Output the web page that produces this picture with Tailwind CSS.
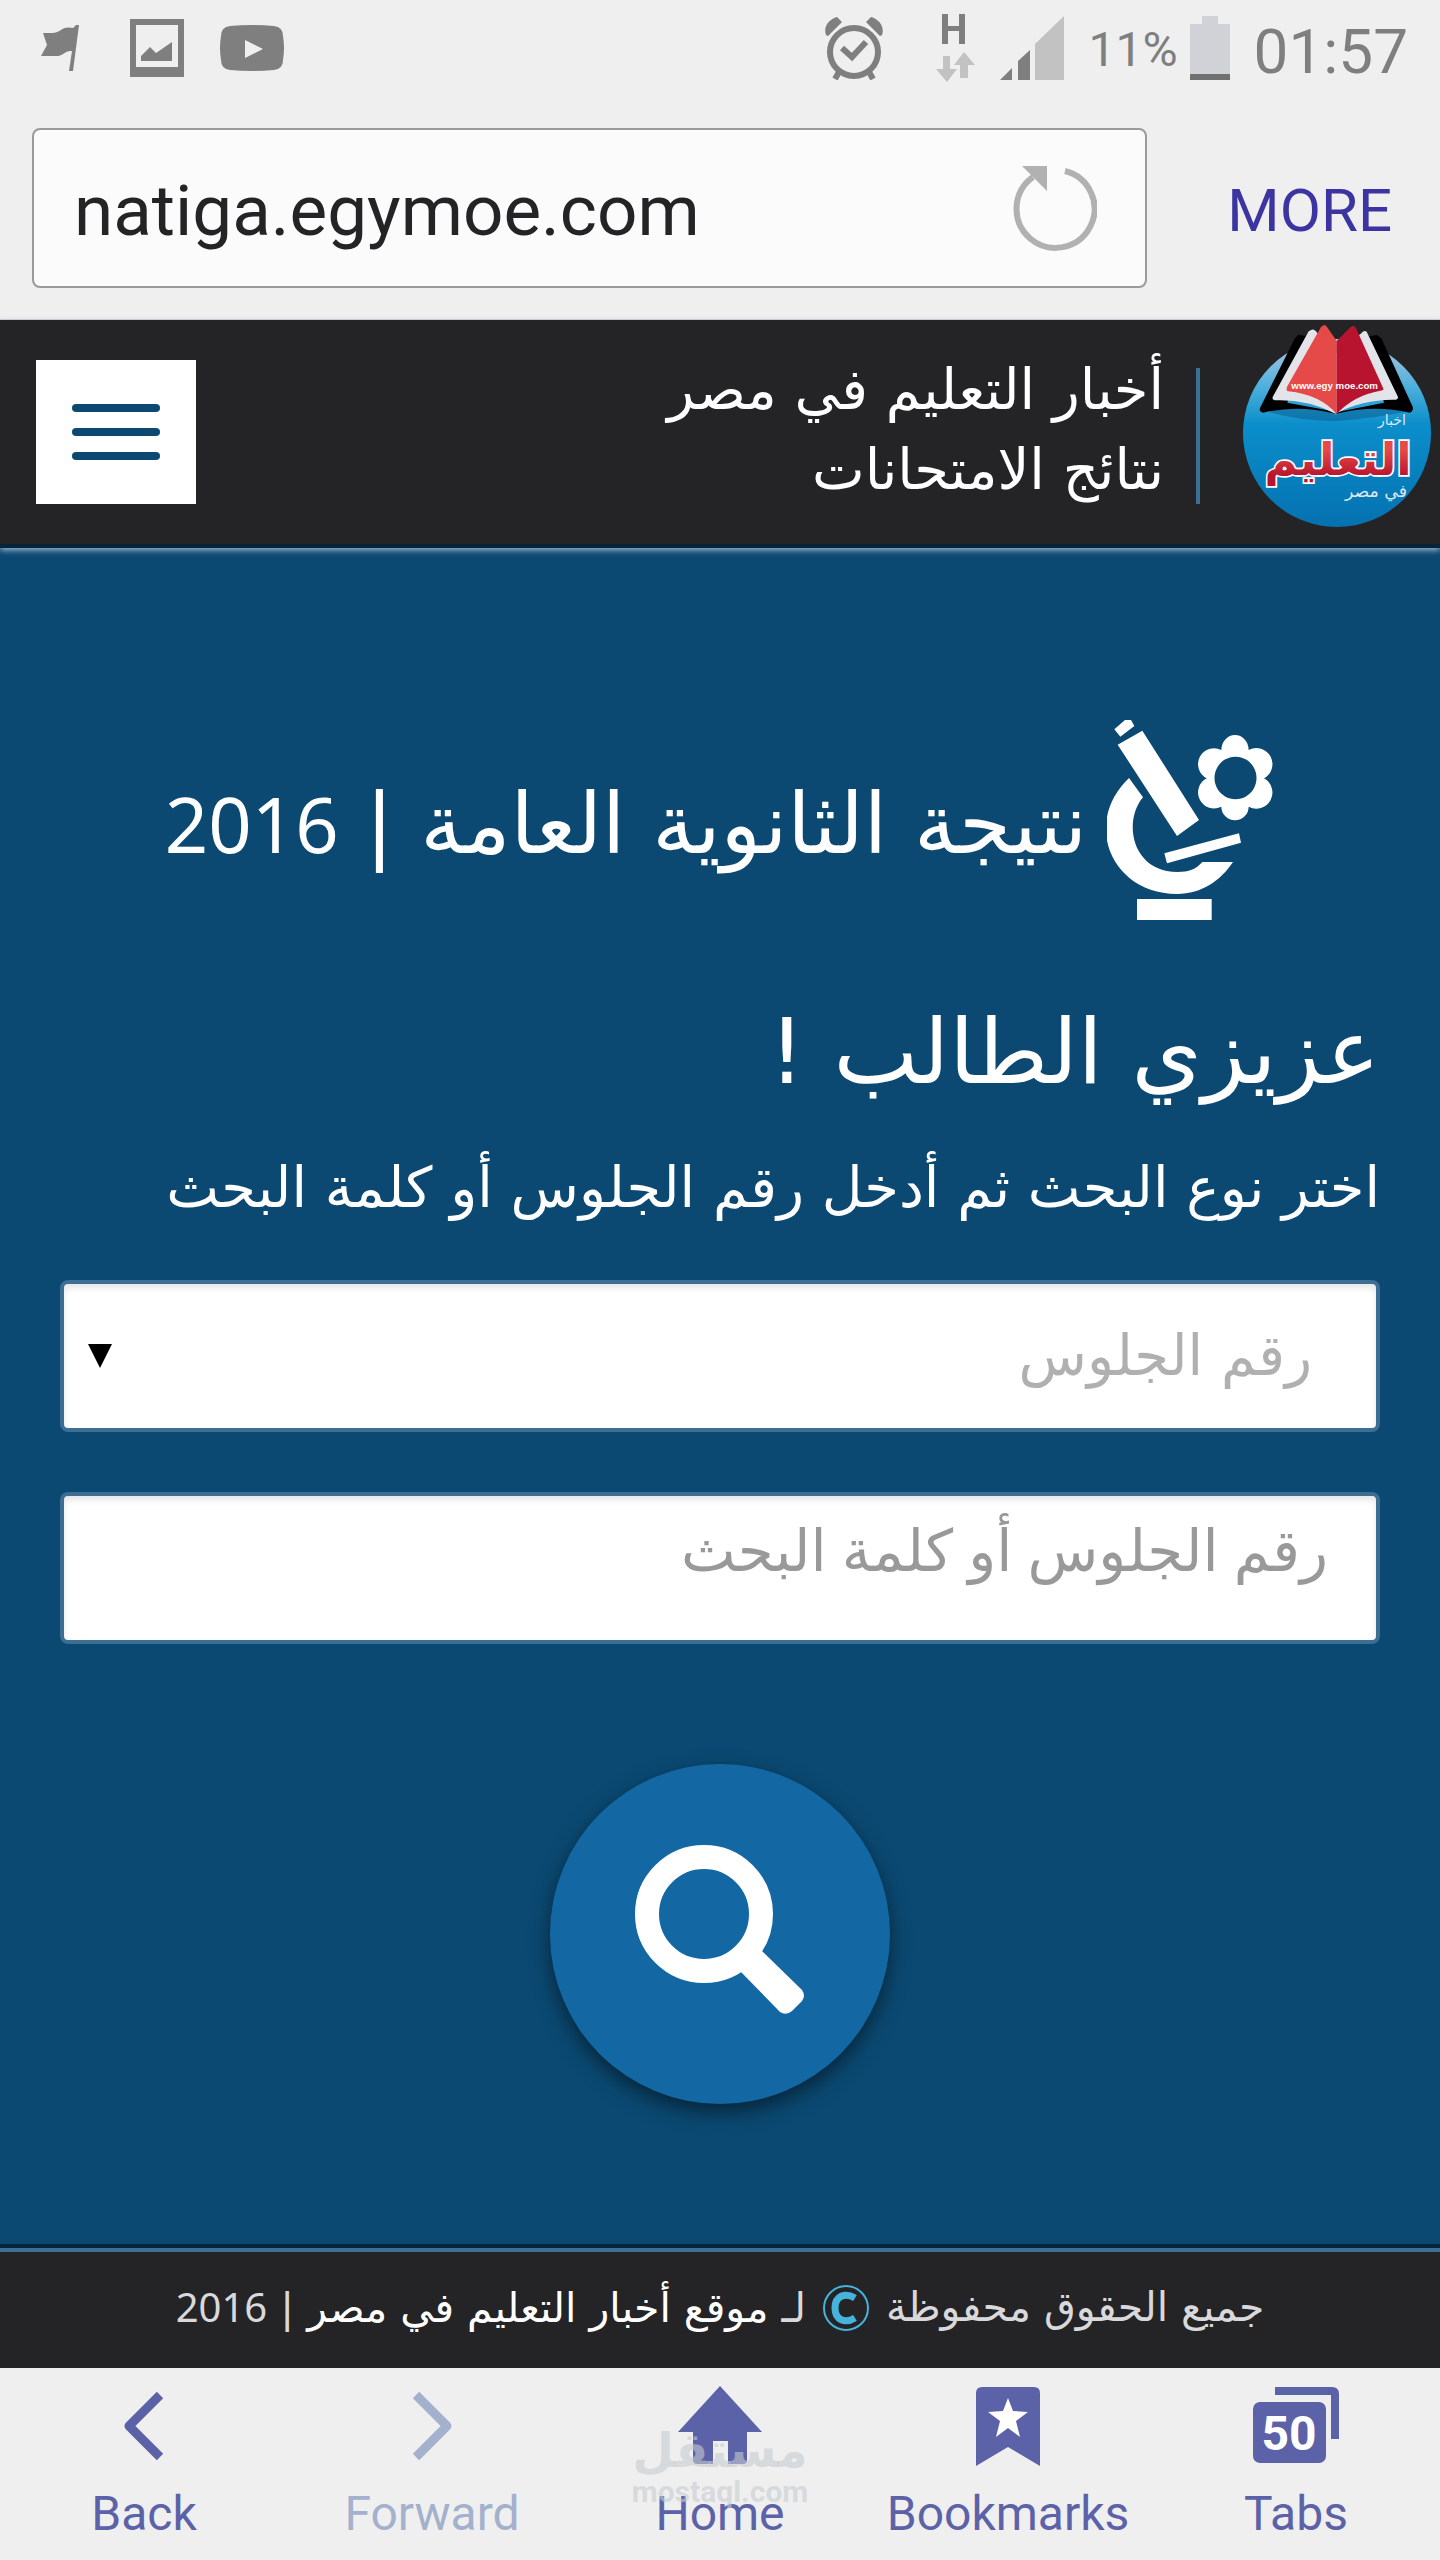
<!DOCTYPE html>
<html lang="ar">
<head>
    <meta charset="UTF-8">
    <meta name="viewport" content="width=device-width, initial-scale=1">
    <title>نتيجة الثانوية العامة | 2016</title>
    <script src="https://cdn.jsdelivr.net/npm/@tailwindcss/browser@4"></script>
</head>
<body class="min-h-screen flex flex-col bg-[#0b4972] font-['DejaVu_Sans',sans-serif] text-white">

    <!-- Phone status bar -->
    <div class="flex items-center justify-between h-24 px-8 bg-[#efefef] text-[#7f7f7f] font-[Roboto,sans-serif]">
        <div class="flex items-center gap-9 pl-2">
            <svg class="w-[54px] h-[60px]" viewBox="0 0 54 60" fill="currentColor">
                <path d="M36 7h3l-6 46h-4l3-20c-7-1-8 5-16 5l-15 0 6-11-4-12c7 0 13 1 18-3 3-3 8-3 12-2z" />
            </svg>
            <svg class="w-[54px] h-[58px]" viewBox="0 0 54 58" fill="currentColor">
                <path fill-rule="evenodd" d="M0 0h54v58H0zM6 6v42h42V6z" />
                <path d="M11 42V37l9-9 6 6 16-11v19z" />
            </svg>
            <svg class="w-[64px] h-[46px]" viewBox="0 0 64 46" fill="currentColor">
                <path fill-rule="evenodd" d="M10 1Q32-1 54 1Q63 2 63 11Q65 23 63 35Q63 44 54 45Q32 47 10 45Q1 44 1 35Q-1 23 1 11Q1 2 10 1zM25 15v18l18-9z" />
            </svg>
        </div>
        <div class="flex items-center gap-6">
            <svg class="w-[60px] h-[64px] mr-7" viewBox="0 0 60 64" fill="none" stroke="currentColor">
                <circle cx="30" cy="36" r="24" stroke-width="6" />
                <path stroke-width="6" d="M18 32l10 9 14-15M15 56l-4 7M45 56l4 7" />
                <path fill="currentColor" stroke="none" d="M2 19C-1 11 5 3 13 1l5 5L4 20zM58 19C61 11 55 3 47 1l-5 5 14 14z" />
            </svg>
            <svg class="w-10 h-[68px]" viewBox="0 0 40 68">
                <path fill="#7f7f7f" d="M6 0h6v12h11V0h6v30h-6V17H12v13H6z" />
                <path fill="#c2c2c2" d="M7 42h7v13h7L11 68 0 55h7zM24 64h8V51h7L28 38 18 51h6z" />
            </svg>
            <svg class="w-16 h-16" viewBox="0 0 64 64">
                <path fill="#c2c2c2" d="M64 0v64H35V28z" />
                <path fill="#7f7f7f" d="M30 34v30H18V45zM12 52v12H0z" />
            </svg>
            <div class="flex items-center gap-3">
                <span class="pt-1 text-5xl">11%</span>
                <svg class="w-10 h-16" viewBox="0 0 40 64">
                    <path fill="#d1d2d7" d="M12 0h16v8h12v50H0V8h12z" />
                    <path fill="#707070" d="M0 58h40v6H0z" />
                </svg>
            </div>
            <span class="pt-2 text-[62px] leading-none">01:57</span>
        </div>
    </div>

    <!-- Address bar -->
    <div class="flex items-center h-56 px-8 bg-[#efefef] border-b border-[#cfcfcf] font-[Roboto,sans-serif]">
        <div class="flex flex-1 items-center h-40 pl-10 pr-12 rounded-lg border-2 border-[#9a9a9a] bg-[#fbfbfb]">
            <input type="text" value="natiga.egymoe.com" aria-label="Address" class="flex-1 min-w-0 pt-2 text-[71px] text-[#242426] outline-none">
            <button type="button" aria-label="Reload">
                <svg class="w-[84px] h-[86px]" viewBox="0 0 84 86">
                    <path fill="none" stroke="#b1b1b1" stroke-width="6" d="M52 6A39 39 0 1 1 20 12" />
                    <path fill="#b1b1b1" d="M9 1h25v25z" />
                </svg>
            </button>
        </div>
        <button type="button" class="pl-20 pr-4 pt-1.5 text-[60px] text-[#3c34a0]">MORE</button>
    </div>

    <!-- Site header -->
    <header dir="rtl" class="relative flex items-center h-56 pr-2 pl-9 bg-[#242426] border-b-4 border-[#06243a] box-content shadow-[0_2px_6px_#a9b9d8]">
        <a href="#" aria-label="أخبار التعليم في مصر" class="pb-3">
            <svg class="w-[190px] h-[204px]" viewBox="64 42 570 612">
                <defs>
                    <linearGradient id="globe" x1="0" y1="0" x2="0" y2="1">
                        <stop offset="0" stop-color="#b9c6e4" />
                        <stop offset=".25" stop-color="#4fb0dc" />
                        <stop offset=".45" stop-color="#0b8fcb" />
                        <stop offset="1" stop-color="#0571b0" />
                    </linearGradient>
                    <linearGradient id="word" x1="0" y1="0" x2="0" y2="1">
                        <stop offset=".3" stop-color="#e54a48" />
                        <stop offset=".8" stop-color="#b9142f" />
                    </linearGradient>
                </defs>
                <circle cx="349" cy="369" r="282" fill="url(#globe)" />
                <path fill="#07598c" opacity=".5" d="M140 305q100-26 205 10 100-36 210-10-100 20-210 28-105 0-205-28z" />
                <path fill="#000" d="M232 75l28 3-60 200 150 28 140-28-50-198 28-5 14 10 94 205q4 12-8 18-110-26-223 4-113-30-217-4-14-2-10-14L222 86z" />
                <path fill="#e3e4ea" d="M273 59q10-2 17 11l57 60 75-60q8-11 16-5l94 196q0 8-8 8-96-2-180 42-84-44-182-40-8-2-6-10L264 64z" />
                <path fill="#e54a48" d="M310 45q6 0 9 6l29 42v219q-50-58-145-68-8-2-4-14L301 51z" />
                <path fill="#b9142f" d="M398 47q6 2 8 8l83 183q-2 4-10 4-80 14-131 70V93l42-42z" />
                <text x="342" y="237" text-anchor="middle" fill="#fff" font-size="29" font-weight="bold" class="font-['Liberation_Sans',sans-serif]">www.egy moe.com</text>
                <g class="font-['DejaVu_Sans',sans-serif]" text-anchor="middle">
                    <text x="514" y="346" fill="#dfe8f2" font-size="42">اخبار</text>
                    <text x="352" y="496" fill="url(#word)" stroke="#fff" stroke-width="10" paint-order="stroke" font-size="134" font-weight="bold">التعليم</text>
                    <text x="466" y="562" fill="#dfe8f2" font-size="52">في مصر</text>
                </g>
            </svg>
        </a>
        <div class="w-1 h-[136px] mt-2 mr-[42px] bg-[#3c6f94]"></div>
        <div class="pb-1 mr-8 text-[56px] leading-[80px]">
            <p>أخبار التعليم في مصر</p>
            <p>نتائج الامتحانات</p>
        </div>
        <button type="button" aria-label="القائمة" class="flex flex-col items-center justify-center gap-4 w-40 h-36 mr-auto bg-white">
            <span class="w-[88px] h-2 rounded-sm bg-[#0b4972]"></span>
            <span class="w-[88px] h-2 rounded-sm bg-[#0b4972]"></span>
            <span class="w-[88px] h-2 rounded-sm bg-[#0b4972]"></span>
        </button>
    </header>

    <!-- Search form -->
    <main dir="rtl" class="flex-1 px-[60px] pt-[172px]">
        <div class="flex items-center justify-center gap-5">
            <svg class="w-[168px] h-[200px]" viewBox="72 60 504 600" fill="#fff">
                <path d="M94 88l32-28h18l10 18-42 32zM104 134l74-42 170 268-66 48z" />
                <path d="M138 234l42 58c-60 70-36 224 104 224 34 0 54-8 74-30h92c-36 54-92 96-168 96-196 0-286-212-144-348zM244 460l224-60 6 28-222 62zM162 597h224v63H162z" />
                <path fill-rule="evenodd" d="M415 150a41 45 0 0 1 82 0 44 44 0 0 1 46 85 44 44 0 0 1-46 85 41 41 0 0 1-82 0 44 44 0 0 1-44-85 44 44 0 0 1 44-85zM457 170a63 64 0 1 0 1 0z" />
            </svg>
            <h1 class="pt-2 text-[84px] leading-none">نتيجة الثانوية العامة | <span class="font-['Noto_Sans',sans-serif] text-[76px]">2016</span></h1>
        </div>
        <h2 class="mt-13 text-[90px] leading-[160px]">عزيزي الطالب !</h2>
        <p class="mt-2 mb-11 text-[56px] leading-[96px]">اختر نوع البحث ثم أدخل رقم الجلوس أو كلمة البحث</p>

        <form class="flex flex-col">
            <div class="relative">
                <select aria-label="نوع البحث" class="appearance-none w-full h-[152px] px-16 rounded-lg border-4 border-[#3c6f94] bg-white text-[56px] text-[#b0b0b0] shadow-[inset_0_4px_6px_#0000001a]">
                    <option>رقم الجلوس</option>
                </select>
                <svg class="absolute left-7 top-16 w-6 h-6 pointer-events-none" viewBox="0 0 24 24"><path d="M0 0h24L12 24z" /></svg>
            </div>
            <input type="text" aria-label="كلمة البحث" placeholder="رقم الجلوس أو كلمة البحث" class="w-full h-[152px] mt-[60px] px-12 pb-10 rounded-lg border-4 border-[#3c6f94] bg-white font-['Noto_Sans','DejaVu_Sans',sans-serif] text-[58px] text-[#242426] placeholder:text-[#999] shadow-[inset_0_4px_6px_#0000001a]">
            <button type="submit" aria-label="بحث" class="self-center flex items-center justify-center w-[340px] h-[340px] pb-2 mt-[120px] rounded-full bg-[#1368a4] shadow-[0_8px_20px_#00000080]">
                <svg class="w-[170px] h-[170px]" viewBox="0 0 170 170">
                    <circle cx="69" cy="69" r="57" fill="none" stroke="#fff" stroke-width="24" />
                    <path fill="#fff" d="M106 127l21-21 40 39q4 6 0 11l-10 10q-6 5-12 1z" />
                </svg>
            </button>
        </form>
    </main>

    <!-- Copyright -->
    <footer dir="rtl" class="flex items-center justify-center gap-4 h-[120px] pb-1 border-t-4 border-[#3c6f94] bg-[#242426] text-[41px] text-[#d9d9dc] shadow-[0_-4px_0_#06243a]">
        <span>جميع الحقوق محفوظة</span>
        <svg class="w-12 h-12" viewBox="0 0 48 48" fill="none" stroke="#45b3dc">
            <circle cx="24" cy="24" r="22" stroke-width="2" />
            <path stroke-width="7" d="M33 14c-10-6-20-2-20 10s10 16 20 10" />
        </svg>
        <span>لـ <a href="#" class="text-white">موقع أخبار التعليم في مصر</a> | <span class="font-['Noto_Sans',sans-serif] text-[40px]">2016</span></span>
    </footer>

    <!-- Browser toolbar -->
    <nav class="relative grid grid-cols-5 h-48 pt-3.5 bg-[#efefef] font-[Roboto,sans-serif] text-5xl text-[#5c62a8]">
        <button type="button" class="flex flex-col items-center gap-5">
            <svg class="w-[88px] h-[88px]" viewBox="0 0 88 88" fill="none" stroke="currentColor" stroke-width="9" stroke-linejoin="round"><path d="M60 13L29 44l31 31" /></svg>
            Back
        </button>
        <button type="button" class="flex flex-col items-center gap-5 text-[#a3b1cd]">
            <svg class="w-[88px] h-[88px]" viewBox="0 0 88 88" fill="none" stroke="currentColor" stroke-width="9" stroke-linejoin="round"><path d="M28 13l31 31-31 31" /></svg>
            Forward
        </button>
        <button type="button" class="flex flex-col items-center gap-5">
            <svg class="w-[88px] h-[88px]" viewBox="0 0 88 88" fill="currentColor"><path d="M44 4l42 46H71v28q0 4-4 4H52V59H37v23H21q-4 0-4-4V50H2z" /></svg>
            Home
        </button>
        <button type="button" class="flex flex-col items-center gap-5">
            <svg class="w-[88px] h-[88px]" viewBox="0 0 88 88" fill="currentColor">
                <path d="M18 5h52q6 0 6 6v73L44 65 12 84V11q0-6 6-6z" />
                <path fill="#fff" d="M44 16l5 13 15 1-12 9 4 16-12-9-12 9 4-16-12-9 15-1z" />
            </svg>
            Bookmarks
        </button>
        <button type="button" class="flex flex-col items-center gap-5">
            <svg class="w-[88px] h-[88px]" viewBox="0 0 88 88" fill="currentColor">
                <path d="M23 5h57q7 0 7 7v45h-8V13H23z" />
                <rect x="1" y="20" width="73" height="61" rx="7" />
                <text x="37" y="68" text-anchor="middle" font-size="48" font-weight="bold" fill="#fff">50</text>
            </svg>
            Tabs
        </button>
        <div class="absolute inset-x-0 top-13 text-center font-bold text-[#c8ccd0]/60 pointer-events-none">
            <div class="font-['DejaVu_Sans',sans-serif] text-5xl leading-[60px]">مستقل</div>
            <div class="text-[30px] leading-6">mostaql.com</div>
        </div>
    </nav>
</body>
</html>
